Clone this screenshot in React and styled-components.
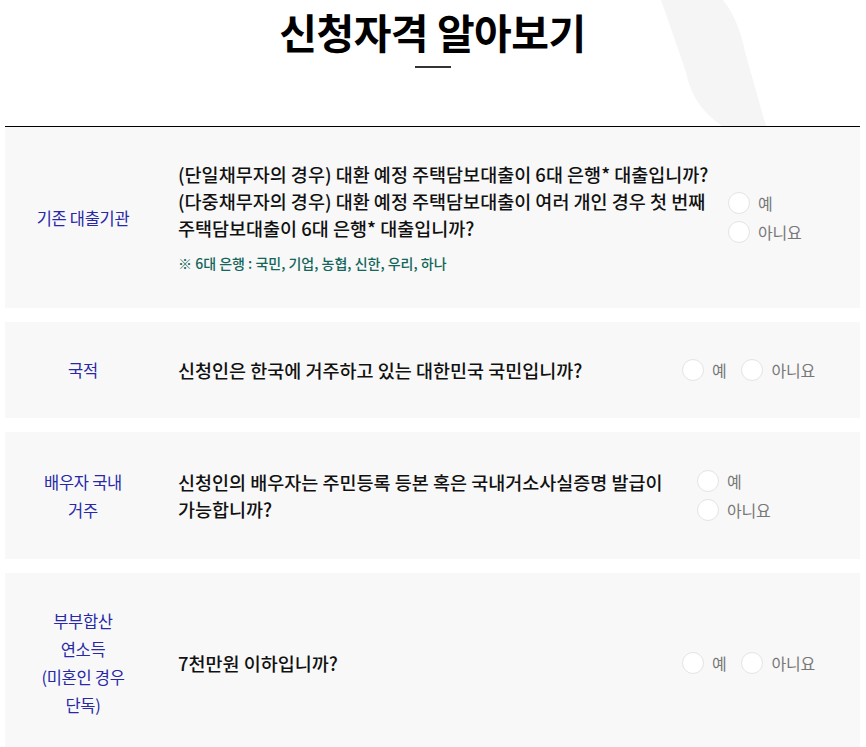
import React from "react";
import styled, { createGlobalStyle } from "styled-components";

const Global = createGlobalStyle`
  html, body { margin: 0; padding: 0; background: #fff; }
  body { font-family: "Noto Sans CJK KR", "Noto Sans", sans-serif; color: #111; }
  * { box-sizing: border-box; }
`;

const Page = styled.div`
  width: 855px;
  margin: 0 0 0 5px;
`;

const Header = styled.header`
  position: relative;
  height: 127px;
  display: flex;
  flex-direction: column;
  align-items: center;
  border-bottom: 1px solid #000;
`;

const Swoosh = styled.svg`
  position: absolute;
  left: 0;
  top: 0;
  z-index: 0;
`;

const Title = styled.h2`
  position: relative;
  z-index: 1;
  margin: 5px 0 0;
  font-size: 41px;
  line-height: 52px;
  font-weight: 700;
  letter-spacing: -0.5px;
  color: #000;
`;

const TitleBar = styled.span`
  position: relative;
  z-index: 1;
  display: block;
  width: 36px;
  height: 2px;
  margin-top: 9px;
  background: #333;
`;

const List = styled.div`
  display: flex;
  flex-direction: column;
  gap: 14px;
`;

const Row = styled.div`
  display: flex;
  align-items: center;
  background: #f8f8f8;
  padding: ${(p) => (p.$tall ? "35.5px" : "34px")} 0;
`;

const Label = styled.div`
  flex: none;
  width: 156px;
  padding: 0 31px;
  text-align: center;
  color: #2828a8;
  font-size: 16.5px;
  line-height: 28px;
  letter-spacing: -0.3px;
  word-break: keep-all;
`;

const Question = styled.div`
  margin-left: 17px;
  ${(p) => (p.$w ? `flex: none; width: ${p.$w}px;` : "flex: 1;")}
  font-size: 18.5px;
  line-height: 27px;
  letter-spacing: 0;
  font-weight: 500;
  color: #111;
  word-break: keep-all;
`;

const Note = styled.p`
  margin: 10px 0 0;
  font-size: 14px;
  line-height: 22px;
  letter-spacing: 0;
  color: #12665a;
  font-weight: 500;
`;

const Options = styled.div`
  flex: none;
  display: flex;
  flex-direction: ${(p) => (p.$stack ? "column" : "row")};
  gap: ${(p) => (p.$stack ? "7px" : "15px")};
  margin-left: 14px;
  margin-right: ${(p) => (p.$stack ? "0" : "45px")};
`;

const Option = styled.label`
  display: flex;
  align-items: center;
  gap: 8px;
  font-size: 16px;
  line-height: 22px;
  letter-spacing: -0.2px;
  color: #777;
  cursor: pointer;
`;

const Circle = styled.span`
  display: block;
  width: 22px;
  height: 22px;
  border-radius: 50%;
  background: #fff;
  border: 1px solid #e4e4e4;
`;

const rows = [
  {
    label: "기존 대출기관",
    q: [
      "(단일채무자의 경우) 대환 예정 주택담보대출이 6대 은행* 대출입니까?",
      "(다중채무자의 경우) 대환 예정 주택담보대출이 여러 개인 경우 첫 번째 주택담보대출이 6대 은행* 대출입니까?",
    ],
    note: "※ 6대 은행 : 국민, 기업, 농협, 신한, 우리, 하나",
    w: 536,
    stack: true,
  },
  { label: "국적", q: ["신청인은 한국에 거주하고 있는 대한민국 국민입니까?"] },
  {
    label: "배우자 국내 거주",
    q: ["신청인의 배우자는 주민등록 등본 혹은 국내거소사실증명 발급이 가능합니까?"],
    w: 505,
    stack: true,
    tall: true,
  },
  { label: "부부합산 연소득 (미혼인 경우 단독)", q: ["7천만원 이하입니까?"] },
];

export default function App() {
  return (
    <Page>
      <Global />
      <Header>
        <Swoosh width="855" height="126" viewBox="0 0 855 126">
          <path
            d="M656 0 L718 0 C730 15 737 35 740 52 L761 126 L717 126 C697 112 686 96 681 72 Z"
            fill="#f5f5f5"
          />
        </Swoosh>
        <Title>신청자격 알아보기</Title>
        <TitleBar />
      </Header>
      <List>
        {rows.map((r, i) => (
          <Row key={i} $tall={r.tall}>
            <Label>{r.label}</Label>
            <Question $w={r.w}>
              {r.q.map((line, j) => (
                <div key={j}>{line}</div>
              ))}
              {r.note && <Note>{r.note}</Note>}
            </Question>
            <Options $stack={r.stack}>
              <Option>
                <Circle />예
              </Option>
              <Option>
                <Circle />아니요
              </Option>
            </Options>
          </Row>
        ))}
      </List>
    </Page>
  );
}
